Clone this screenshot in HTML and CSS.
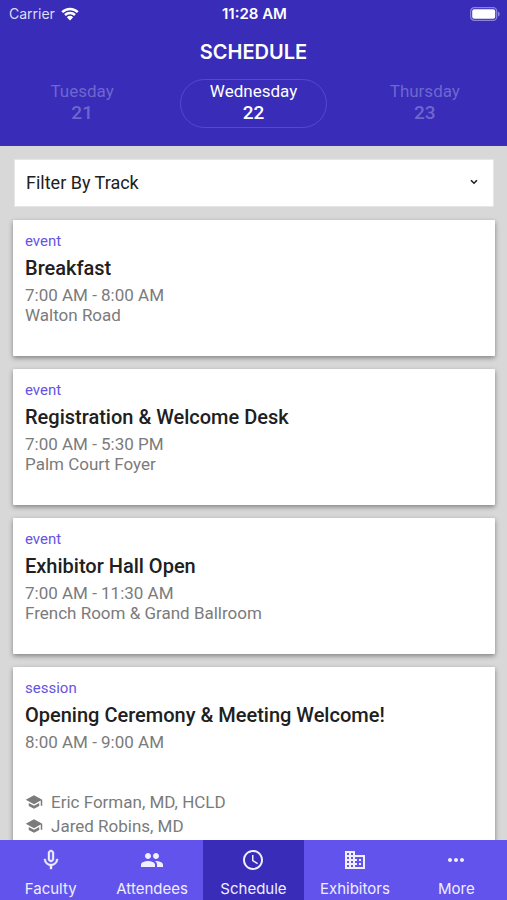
FILE: index.html
```html
<!DOCTYPE html>
<html lang="en">
<head>
<meta charset="utf-8">
<meta name="viewport" content="width=device-width, initial-scale=1">
<title>Schedule</title>
<link rel="stylesheet" href="styles.css">
</head>
<body>
<header class="header">
  <div class="status">
    <span class="carrier">Carrier
      <svg class="wifi" viewBox="0 0 18 14" aria-hidden="true"><path d="M1.200 5.100a11.200 11.200 0 0 1 15.600 0M4 8a7.200 7.200 0 0 1 10 0" fill="none" stroke="currentColor" stroke-width="2.500"/><path d="M5.800 10.200a4.700 4.700 0 0 1 6.400 0L9 13.600z" fill="currentColor"/></svg>
    </span>
    <span class="clock">11:28 AM</span>
    <svg class="battery" viewBox="0 0 30 14" aria-hidden="true"><rect x=".7" y=".7" width="26" height="12.600" rx="3.600" fill="none" stroke="#8b82dc" stroke-width="1.300"/><rect x="2.200" y="2.200" width="23" height="9.600" rx="2" fill="#fff"/><path d="M28 4.600c2.300.8 2.300 4 0 4.800z" fill="#8b82dc"/></svg>
  </div>
  <h1 class="title">SCHEDULE</h1>
  <nav class="days" aria-label="Day">
    <button class="day" type="button">Tuesday<span class="date">21</span></button>
    <button class="day day-active" type="button" aria-current="date">Wednesday<span class="date">22</span></button>
    <button class="day" type="button">Thursday<span class="date">23</span></button>
  </nav>
</header>
<main class="content">
  <div class="filter">
    <select class="filter-select" aria-label="Filter By Track">
      <option>Filter By Track</option>
    </select>
    <svg class="chevron" viewBox="0 0 8 6" aria-hidden="true"><path d="M1 1.200 4 4.200 7 1.200" fill="none" stroke="currentColor" stroke-width="1.600"/></svg>
  </div>
  <article class="card">
    <p class="kind">event</p>
    <h2 class="name">Breakfast</h2>
    <p class="meta">7:00 AM - 8:00 AM</p>
    <p class="meta">Walton Road</p>
  </article>
  <article class="card">
    <p class="kind">event</p>
    <h2 class="name">Registration &amp; Welcome Desk</h2>
    <p class="meta">7:00 AM - 5:30 PM</p>
    <p class="meta">Palm Court Foyer</p>
  </article>
  <article class="card">
    <p class="kind">event</p>
    <h2 class="name">Exhibitor Hall Open</h2>
    <p class="meta">7:00 AM - 11:30 AM</p>
    <p class="meta">French Room &amp; Grand Ballroom</p>
  </article>
  <article class="card">
    <p class="kind">session</p>
    <h2 class="name">Opening Ceremony &amp; Meeting Welcome!</h2>
    <p class="meta">8:00 AM - 9:00 AM</p>
    <ul class="speakers">
      <li class="speaker"><svg class="cap" viewBox="0 0 24 24" aria-hidden="true"><path d="M5 13.180v4L12 21l7-3.820v-4L12 17l-7-3.820zM12 3 1 9l11 6 9-4.910V17h2V9L12 3z" fill="currentColor"/></svg>Eric Forman, MD, HCLD</li>
      <li class="speaker"><svg class="cap" viewBox="0 0 24 24" aria-hidden="true"><path d="M5 13.180v4L12 21l7-3.820v-4L12 17l-7-3.820zM12 3 1 9l11 6 9-4.910V17h2V9L12 3z" fill="currentColor"/></svg>Jared Robins, MD</li>
    </ul>
  </article>
</main>
<nav class="tabs" aria-label="Main">
  <a class="tab" href="#faculty"><svg class="icon" viewBox="0 0 24 24" aria-hidden="true"><path fill="currentColor" d="M12 14c1.660 0 2.990-1.340 2.990-3L15 5c0-1.660-1.340-3-3-3S9 3.340 9 5v6c0 1.660 1.340 3 3 3zm-1.200-9.100c0-.66.54-1.200 1.200-1.200s1.200.54 1.200 1.200l-.01 6.200c0 .66-.53 1.200-1.190 1.200s-1.200-.54-1.200-1.200V4.900zm6.500 6.100c0 3-2.540 5.100-5.300 5.100S6.700 14 6.700 11H5c0 3.410 2.720 6.230 6 6.720V21h2v-3.280c3.280-.48 6-3.300 6-6.720h-1.700z" stroke="currentColor" stroke-width=".4"/></svg>Faculty</a>
  <a class="tab" href="#attendees"><svg class="icon" viewBox="0 0 24 24" aria-hidden="true"><path fill="currentColor" d="M16 11c1.660 0 2.990-1.340 2.990-3S17.660 5 16 5s-3 1.340-3 3 1.340 3 3 3zm-8 0c1.660 0 2.990-1.340 2.990-3S9.660 5 8 5 5 6.340 5 8s1.340 3 3 3zm0 2c-2.330 0-7 1.170-7 3.500V19h14v-2.500c0-2.330-4.670-3.500-7-3.500zm8 0c-.29 0-.62.020-.97.050 1.160.84 1.970 1.970 1.970 3.450V19h6v-2.500c0-2.330-4.670-3.500-7-3.500z"/></svg>Attendees</a>
  <a class="tab tab-active" href="#schedule" aria-current="page"><svg class="icon" viewBox="0 0 24 24" aria-hidden="true"><path fill="currentColor" d="M11.990 2C6.470 2 2 6.480 2 12s4.470 10 9.990 10C17.520 22 22 17.520 22 12S17.520 2 11.990 2zM12 20c-4.420 0-8-3.580-8-8s3.580-8 8-8 8 3.580 8 8-3.580 8-8 8zm.5-13H11v6l5.250 3.150.75-1.230-4.500-2.670z"/></svg>Schedule</a>
  <a class="tab" href="#exhibitors"><svg class="icon" viewBox="0 0 24 24" aria-hidden="true"><path fill="currentColor" d="M12 7V3H2v18h20V7H12zM6 19H4v-2h2v2zm0-4H4v-2h2v2zm0-4H4V9h2v2zm0-4H4V5h2v2zm4 12H8v-2h2v2zm0-4H8v-2h2v2zm0-4H8V9h2v2zm0-4H8V5h2v2zm10 12h-8v-2h2v-2h-2v-2h2v-2h-2V9h8v10zm-2-8h-2v2h2v-2zm0 4h-2v2h2v-2z"/></svg>Exhibitors</a>
  <a class="tab" href="#more"><svg class="icon" viewBox="0 0 24 24" aria-hidden="true"><path fill="currentColor" d="M6 10c-1.100 0-2 .9-2 2s.9 2 2 2 2-.9 2-2-.9-2-2-2zm12 0c-1.100 0-2 .9-2 2s.9 2 2 2 2-.9 2-2-.9-2-2-2zm-6 0c-1.100 0-2 .9-2 2s.9 2 2 2 2-.9 2-2-.9-2-2-2z"/></svg>More</a>
</nav>
</body>
</html>
```
FILE: styles.css
```css
* {
  box-sizing: border-box;
}

body {
  margin: 0;
  height: 100vh;
  display: flex;
  flex-direction: column;
  overflow: hidden;
  background: #d8d8d8;
  color: #202020;
  font-family: Roboto, sans-serif;
}

h1, h2, p, ul {
  margin: 0;
  padding: 0;
}

.header {
  flex: none;
  padding-bottom: 18px;
  background: #382cb9;
  color: #fff;
}

.status {
  display: grid;
  grid-template-columns: 1fr auto 1fr;
  align-items: center;
  height: 28px;
  padding: 0 7px 0 9px;
  font: 500 14px/28px Inter, sans-serif;
}

.carrier {
  display: flex;
  align-items: center;
  gap: 6px;
  color: #dedcf6;
  font-weight: 400;
}

.wifi {
  width: 18px;
  height: 14px;
  color: #fff;
}

.clock {
  font-size: 15px;
  font-weight: 600;
}

.battery {
  justify-self: end;
  width: 30px;
  height: 14px;
}

.title {
  padding-top: 12px;
  font: 600 20px/24px Inter, sans-serif;
  text-align: center;
}

.days {
  display: grid;
  grid-template-columns: repeat(3, 1fr);
  column-gap: 25px;
  padding: 15px 9px 0;
}

.day {
  height: 49px;
  padding: 0 0 3px;
  border: 1px solid transparent;
  border-radius: 25px;
  background: none;
  color: #6f66ce;
  font: 400 17px/22px Roboto, sans-serif;
}

.day-active {
  border-color: #5548d8;
  color: #fff;
}

.date {
  display: block;
  font-size: 19px;
  font-weight: 500;
}

.content {
  flex: 1;
  min-height: 0;
  overflow: hidden;
  display: flex;
  flex-direction: column;
  gap: 13px;
  padding: 13px 12px 0 13px;
}

.filter {
  flex: none;
  position: relative;
  margin: 0 1px;
}

.filter-select {
  display: block;
  width: 100%;
  height: 48px;
  padding: 0 11px;
  border: 1px solid #e6e6e6;
  border-radius: 0;
  appearance: none;
  background: #fff;
  color: #202020;
  font: 400 18px/22px Roboto, sans-serif;
}

.chevron {
  position: absolute;
  top: 20px;
  right: 16px;
  width: 8px;
  height: 6px;
  pointer-events: none;
}

.card {
  flex: none;
  min-height: 136px;
  padding: 12px 12px 20px;
  border-radius: 1px;
  background: #fff;
  box-shadow: 0 2px 5px rgba(0, 0, 0, 0.4);
}

.kind {
  color: #6653e4;
  font-size: 15px;
  line-height: 18px;
}

.name {
  margin: 5px 0 4px;
  font-size: 20px;
  font-weight: 500;
  line-height: 26px;
}

.meta {
  color: #7b7b7b;
  font-size: 17px;
  line-height: 20px;
}

.speakers {
  margin-top: 38px;
  list-style: none;
}

.speaker {
  display: flex;
  align-items: center;
  gap: 8px;
  color: #7b7b7b;
  font-size: 17px;
  line-height: 24px;
}

.cap {
  width: 18px;
  height: 18px;
}

.tabs {
  flex: none;
  display: grid;
  grid-template-columns: repeat(5, 1fr);
  height: 60px;
  background: #6153ec;
}

.tab {
  display: flex;
  flex-direction: column;
  align-items: center;
  gap: 7px;
  padding-top: 8px;
  color: #f0eeff;
  font: 400 15px/20px Inter, sans-serif;
  text-decoration: none;
}

.tab-active {
  background: #382cb9;
}

.icon {
  flex: none;
  width: 24px;
  height: 24px;
}
```
